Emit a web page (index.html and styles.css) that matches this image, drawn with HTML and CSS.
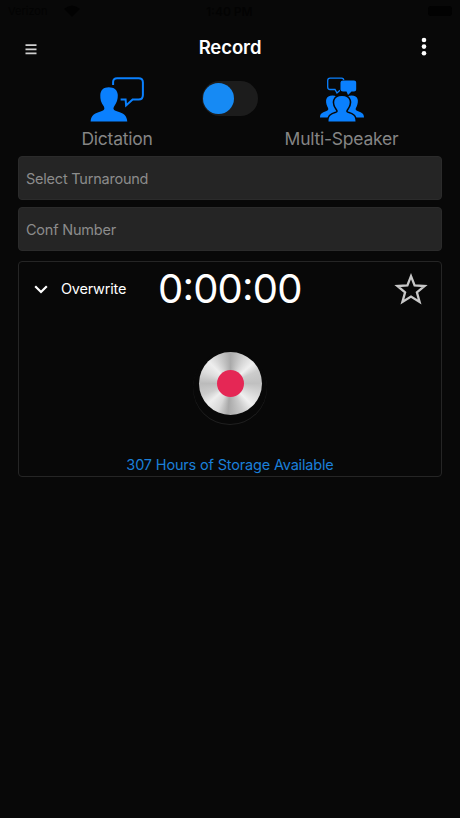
FILE: index.html
```html
<!DOCTYPE html>
<html lang="en">
<head>
<meta charset="utf-8">
<title>Record</title>
<link rel="stylesheet" href="styles.css">
</head>
<body>
<div class="status">
  <span class="carrier">Verizon</span>
  <svg class="wifi" width="16" height="12" viewBox="0 0 16 12"><path d="M0 4Q8-3 16 4L8 12Z"/></svg>
  <span class="clock">1:40 PM</span>
  <span class="battery"></span>
</div>
<header class="bar">
  <svg width="12" height="11" viewBox="0 0 12 11"><path d="M.5 1.2h11M.5 5.3h11M.5 9.4h11" stroke="#d0d0d0" stroke-width="1.7"/></svg>
  <h1>Record</h1>
  <svg width="6" height="20" viewBox="0 0 6 20" fill="#fff"><circle cx="3" cy="3" r="2.3"/><circle cx="3" cy="9.6" r="2.3"/><circle cx="3" cy="16.3" r="2.3"/></svg>
</header>
<section class="modes">
  <div class="mode">
    <svg width="54" height="45" viewBox="-.6 0 54 45">
      <path fill="#0a80fe" d="M0 44.500C.5 38 4 36.500 10 34.500C14 33 14.500 32 13 29C10.500 26 9.500 22 9.700 18C10 13 13 10.300 18.200 10.300S27 13 27.200 18C27.400 22 26 26 23.800 29C22 32 22.700 33 27 34.500C33 36.500 36 38 36.700 44.500Z"/>
      <path fill="none" stroke="#0a80fe" stroke-width="2" d="M22.500 8V5Q22.500 1.200 26.500 1.200H48Q52.300 1.200 52.300 5.500V18Q52.300 22.500 48 22.500H42L35.500 28.500L35 22.500H30"/>
    </svg>
    <span>Dictation</span>
  </div>
  <div class="switch"><i></i></div>
  <div class="mode">
    <svg width="46" height="45" viewBox="0 0 46 45">
      <g fill="#0a80fe">
        <path d="M1 40.500C1 36 4 35.500 7.500 34C10 33 9.500 31.500 8.300 29.500C6 24 6.500 18.500 13.500 18.500C20 18.500 20.500 24 18.500 29.500L20 40.500Z"/>
        <path d="M45 40.500C45 36 42 35.500 38.500 34C36 33 36.500 31.500 37.700 29.500C40 24 39.500 18.500 32.500 18.500C26 18.500 25.500 24 27.500 29.500L26 40.500Z"/>
        <path stroke="#080808" stroke-width="3" paint-order="stroke" d="M9.500 44.500C9.500 38.500 12.500 37.500 17 36C19.500 35 19 33.500 17.500 31.500C13.500 26 14.500 19 23 19S32.500 26 28.500 31.500C27 33.500 26.500 35 29 36C33.500 37.500 36.500 38.500 36.500 44.500Z"/>
      </g>
      <path fill="none" stroke="#0a80fe" stroke-width="1.300" d="M21 13.300L18 16L16 12.500H11Q8.700 12.500 8.700 10V3.500Q8.700 1.200 11 1.200H22.500Q24.800 1.200 24.800 3.500"/>
      <path fill="#0a80fe" stroke="#080808" stroke-width="1.200" paint-order="stroke" d="M24 3.500H35Q37.200 3.500 37.200 5.500V12.500Q37.200 14.500 35 14.500H32.500L29 18L27.500 14.500H24Q21.500 14.500 21.500 12.500V5.500Q21.500 3.500 24 3.500Z"/>
    </svg>
    <span class="multi">Multi-Speaker</span>
  </div>
</section>
<main>
  <div class="field"><span class="turn">Select Turnaround</span></div>
  <div class="field"><span class="conf">Conf Number</span></div>
  <section class="recorder">
    <div class="top">
      <svg class="chev" width="14" height="9" viewBox="0 0 14 9"><path d="M1.200 1.200L7 7L12.800 1.200" fill="none" stroke="#fff" stroke-width="2.200"/></svg>
      <span class="over">Overwrite</span>
      <span class="time">0<b>:</b>00<b>:</b>00</span>
      <svg class="star" width="34" height="32" viewBox="0 0 34 32"><path d="M17 3.200L20.600 12.500L30.600 13L22.900 19.300L25.600 29L17 23.600L8.400 29L11.100 19.300L3.400 13L13.400 12.500Z" fill="none" stroke="#c8c8c8" stroke-width="2.300"/></svg>
    </div>
    <div class="dial"><div class="metal"><i></i></div></div>
    <p>307 Hours of Storage Available</p>
  </section>
</main>
</body>
</html>
```
FILE: styles.css
```css
* { box-sizing: border-box; }
body { margin: 0; height: 818px; overflow: hidden; background: #080808; color: #fff; font-family: Inter, "Liberation Sans", sans-serif; }
svg { display: block; flex: none; }
.status { height: 24px; display: grid; grid-template-columns: 56px 142px 1fr 24px; align-items: center; padding: 0 8px 2px 8px; font-size: 12px; color: #030303; }
.wifi { fill: #020202; }
.carrier { font-size: 11px; }
.clock { font-weight: 600; }
.battery { height: 10px; border-radius: 3px; background: #020202; }
.bar { height: 46px; display: grid; grid-template-columns: 12px 1fr 6px; align-items: center; padding: 0 33px 0 25px; }
.bar > svg:first-child { margin-top: 4px; }
h1 { margin: 0; padding-left: 2px; text-align: center; font-size: 18.500px; line-height: 24px; font-weight: 600; letter-spacing: -.1px; }
.modes { height: 86px; padding: 7px 0 0 46px; display: grid; grid-template-columns: 142px 56px 139px; gap: 14px; }
.mode { display: flex; flex-direction: column; align-items: center; gap: 4px; color: #858585; font-size: 17.500px; line-height: 25px; letter-spacing: -.23px; white-space: nowrap; }
.switch { width: 56px; height: 35px; margin-top: 4px; border-radius: 18px; background: #1c1c1c; padding: 2px 1px; }
.switch i { display: block; width: 31px; height: 31px; border-radius: 50%; background: #168af4; }
main { padding: 0 18px; }
.field { height: 44px; margin-bottom: 7px; padding: 0 7px; display: flex; align-items: center; background: #252525; border: 1px solid #2b2b2b; border-radius: 4px; color: #8c8c8c; font-size: 14.500px; letter-spacing: -.22px; }
.recorder { height: 216px; margin-top: 10px; border: 1px solid #252525; border-radius: 4px; }
.top { height: 54px; display: flex; align-items: center; padding-left: 15px; }
.over { margin: -2px 0 0 13px; width: 97px; font-size: 14.500px; letter-spacing: -.22px; }
.time { width: 236px; font-size: 40px; line-height: 54px; font-weight: 400; letter-spacing: -.8px; }
.time b { font-weight: 400; line-height: 0; vertical-align: 3px; }
.dial { width: 74px; height: 74px; margin: 34px auto 0; padding: 2px 6px 0 5.500px; border-radius: 50%; box-shadow: 0 1px 0 #202020; }
.metal { width: 63px; height: 63px; margin: 0 auto; border-radius: 50%; display: grid; place-items: center; background: conic-gradient(#aaa, #d8d8d8 30deg, #efefef 48deg, #ccc 65deg, #c0c0c0 90deg, #d5d5d5 110deg, #f0f0f0 135deg, #ccc 155deg, #a8a8a8 185deg, #d8d8d8 205deg, #eee 228deg, #ccc 248deg, #bbb 270deg, #ddd 295deg, #eee 315deg, #c8c8c8 340deg, #aaa); }
.metal i { width: 27px; height: 27px; border-radius: 50%; background: #e52755; }
.recorder p { margin: 30px 0 0; text-align: center; color: #1b7fd8; font-size: 14.500px; line-height: 22px; letter-spacing: -.17px; }
```
